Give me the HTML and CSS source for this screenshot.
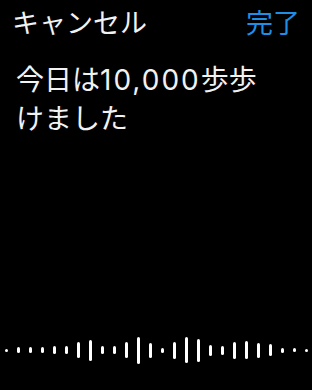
FILE: index.html
```html
<!DOCTYPE html>
<html lang="ja">
<head>
<meta charset="UTF-8" />
<meta name="viewport" content="width=device-width, initial-scale=1" />
<title>音声入力</title>
<link rel="stylesheet" href="styles.css">
</head>
<body>
  <div class="screen">
    <header class="topbar">
      <button class="btn-cancel" type="button">キャンセル</button>
      <button class="btn-done" type="button">完了</button>
    </header>

    <main class="dictation">
      <p class="dictation-text">今日は<span class="num">10,000</span>歩歩けました</p>
    </main>

    <div class="wave" aria-hidden="true">
      <span class="bar" style="height:3px"></span>
      <span class="bar" style="height:6px"></span>
      <span class="bar" style="height:6px"></span>
      <span class="bar" style="height:6px"></span>
      <span class="bar" style="height:8px"></span>
      <span class="bar" style="height:8px"></span>
      <span class="bar" style="height:16px"></span>
      <span class="bar" style="height:21px"></span>
      <span class="bar" style="height:8px"></span>
      <span class="bar" style="height:8px"></span>
      <span class="bar" style="height:16px"></span>
      <span class="bar" style="height:27px"></span>
      <span class="bar" style="height:15px"></span>
      <span class="bar" style="height:5px"></span>
      <span class="bar" style="height:17px"></span>
      <span class="bar" style="height:26px"></span>
      <span class="bar" style="height:23px"></span>
      <span class="bar" style="height:11px"></span>
      <span class="bar" style="height:9px"></span>
      <span class="bar" style="height:17px"></span>
      <span class="bar" style="height:18px"></span>
      <span class="bar" style="height:15px"></span>
      <span class="bar" style="height:12px"></span>
      <span class="bar" style="height:5px"></span>
      <span class="bar" style="height:4px"></span>
      <span class="bar" style="height:3px"></span>
    </div>
  </div>
</body>
</html>
```

FILE: styles.css
```css
/* Temel */
*,
*::before,
*::after {
  box-sizing: border-box;
}

html,
body {
  margin: 0;
  background-color: #000;
}

body {
  font-family: "Noto Sans CJK JP", "Noto Sans", sans-serif;
  color: #f2f2f2;
}

.screen {
  display: flex;
  flex-direction: column;
  height: 390px;
  overflow: hidden;
}

/* Üst çubuk */
.topbar {
  display: flex;
  justify-content: space-between;
  align-items: center;
  padding: 3px 12px 0 12px;
}

.topbar button {
  background: none;
  border: none;
  padding: 0;
  font-family: inherit;
  font-size: 27px;
  line-height: 38px;
  cursor: pointer;
}

.btn-cancel {
  color: #f2f2f2;
}

.btn-done {
  color: #1f8fe6;
}

/* Metin */
.dictation {
  padding: 0 30px 0 16px;
}

.dictation-text {
  margin: 19px 0 0 0;
  font-size: 28px;
  line-height: 37px;
}

.num {
  font-family: Inter, "Noto Sans", sans-serif;
  letter-spacing: 2px;
}

/* Dalga formu */
.wave {
  margin-top: auto;
  height: 30px;
  margin-bottom: 25px;
  display: flex;
  justify-content: center;
  align-items: center;
  gap: 9px;
}

.bar {
  display: block;
  width: 3px;
  background-color: #fff;
  border-radius: 2px;
}
```
